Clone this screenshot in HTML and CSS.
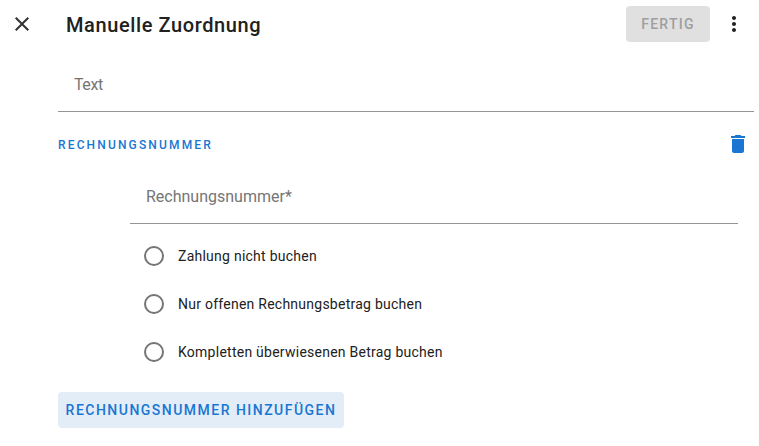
FILE: index.html
```html
<!DOCTYPE html>
<html lang="de">
<head>
    <meta charset="UTF-8">
    <title>Manuelle Zuordnung</title>
    <link rel="stylesheet" href="styles.css">
</head>
<body>
    <header class="toolbar">
        <button class="icon-btn close-btn" aria-label="Schließen">
            <svg width="24" height="24" viewBox="0 0 24 24"><path d="M19 6.41 17.59 5 12 10.59 6.41 5 5 6.41 10.59 12 5 17.59 6.41 19 12 13.41 17.59 19 19 17.59 13.41 12z"/></svg>
        </button>
        <h1 class="title">Manuelle Zuordnung</h1>
        <button class="done-btn" disabled>Fertig</button>
        <button class="icon-btn more-btn" aria-label="Mehr">
            <svg width="24" height="24" viewBox="0 0 24 24"><path d="M12 8c1.1 0 2-.9 2-2s-.9-2-2-2-2 .9-2 2 .9 2 2 2zm0 2c-1.1 0-2 .9-2 2s.9 2 2 2 2-.9 2-2-.9-2-2-2zm0 6c-1.1 0-2 .9-2 2s.9 2 2 2 2-.9 2-2-.9-2-2-2z"/></svg>
        </button>
    </header>
    <main class="content">
        <div class="field text-field"><span class="placeholder">Text</span></div>
        <div class="section-head">
            <span class="section-title">Rechnungsnummer</span>
            <button class="icon-btn delete-btn" aria-label="Löschen">
                <svg width="24" height="24" viewBox="0 0 24 24"><path d="M6 19c0 1.1.9 2 2 2h8c1.1 0 2-.9 2-2V7H6v12zM19 4h-3.5l-1-1h-5l-1 1H5v2h14V4z"/></svg>
            </button>
        </div>
        <div class="field number-field"><span class="placeholder">Rechnungsnummer*</span></div>
        <div class="radio-group">
            <label class="radio-row"><span class="radio"></span>Zahlung nicht buchen</label>
            <label class="radio-row"><span class="radio"></span>Nur offenen Rechnungsbetrag buchen</label>
            <label class="radio-row"><span class="radio"></span>Kompletten überwiesenen Betrag buchen</label>
        </div>
        <button class="add-btn">Rechnungsnummer hinzufügen</button>
    </main>
</body>
</html>
```

FILE: styles.css
```css
body {
    font-family: Roboto, sans-serif;
    background-color: #fff;
    color: #212121;
    margin: 0;
    overflow: hidden;
}
button {
    font-family: inherit;
    border: none;
    background: none;
    padding: 0;
}
.toolbar {
    display: flex;
    align-items: center;
    height: 48px;
    padding: 0 13px 0 10px;
}
.icon-btn {
    display: flex;
    width: 24px;
    height: 24px;
}
.close-btn svg {
    fill: #333;
}
.title {
    flex: 1;
    margin: 0 0 0 32px;
    padding-top: 2px;
    font-size: 20px;
    font-weight: 500;
    letter-spacing: 0.6px;
}
.done-btn {
    width: 84px;
    height: 36px;
    margin-right: 12px;
    border-radius: 4px;
    background-color: #e0e0e0;
    color: #9e9e9e;
    font-size: 14px;
    font-weight: 500;
    letter-spacing: 1.25px;
    text-transform: uppercase;
}
.more-btn svg {
    fill: #212121;
}
.content {
    padding: 8px 5px 0 58px;
}
.field {
    display: flex;
    align-items: center;
    box-sizing: border-box;
    border-bottom: 1px solid #949494;
    padding: 2px 0 0 16px;
    color: #757575;
    font-size: 16px;
}
.text-field {
    height: 56px;
    letter-spacing: -0.4px;
}
.section-head {
    display: flex;
    align-items: center;
    justify-content: space-between;
    height: 24px;
    margin-top: 20px;
    padding-right: 4px;
}
.section-title {
    padding-top: 1px;
    color: #1976d2;
    font-size: 12px;
    font-weight: 500;
    letter-spacing: 2.15px;
    text-transform: uppercase;
}
.delete-btn svg {
    fill: #1976d2;
}
.number-field {
    height: 57px;
    margin: 11px 16px 0 72px;
}
.radio-group {
    display: flex;
    flex-direction: column;
    margin-left: 84px;
    padding-top: 8px;
}
.radio-row {
    display: flex;
    align-items: center;
    height: 48px;
    font-size: 14px;
    letter-spacing: 0.25px;
}
.radio {
    box-sizing: border-box;
    width: 20px;
    height: 20px;
    margin: 0 14px 0 2px;
    border: 2px solid #757575;
    border-radius: 50%;
}
.add-btn {
    display: block;
    width: 286px;
    height: 36px;
    margin-top: 16px;
    border-radius: 4px;
    background-color: #e3edf8;
    color: #1976d2;
    font-size: 14px;
    font-weight: 500;
    letter-spacing: 1.48px;
    text-transform: uppercase;
}
```
